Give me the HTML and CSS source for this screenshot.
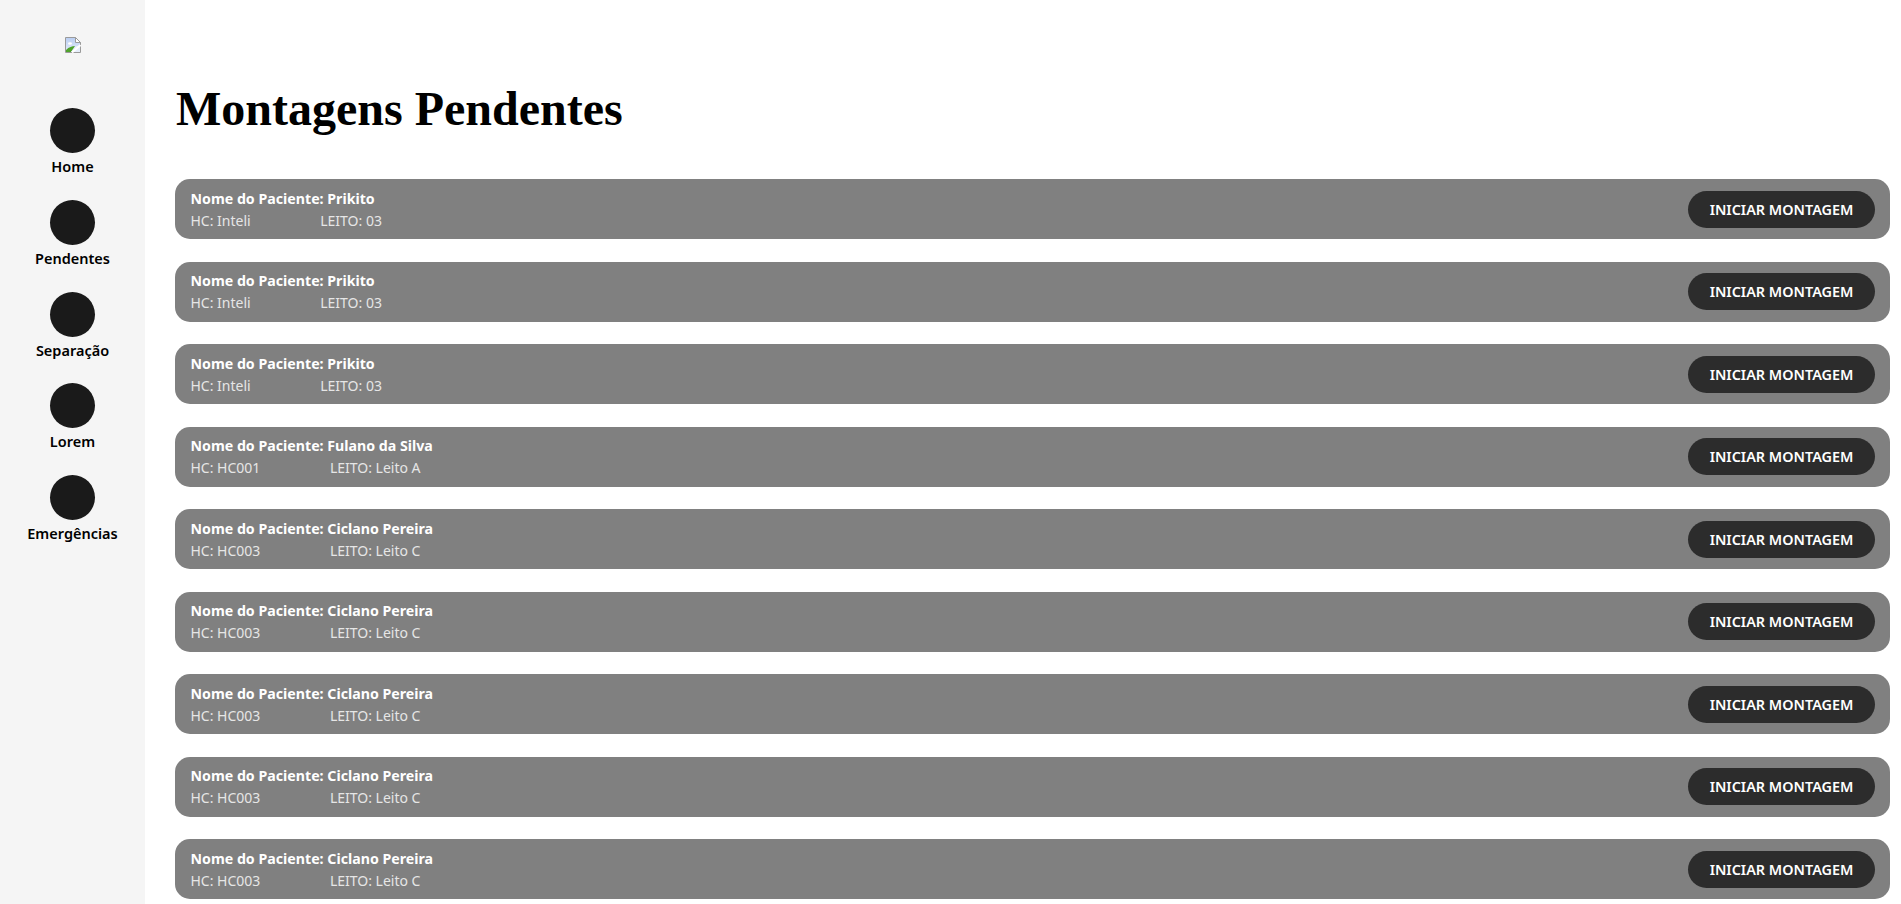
FILE: index.html
```html
<!DOCTYPE html>
<html lang="pt-BR">
<head>
    <meta charset="UTF-8">
    <title>Montagens Pendentes</title>
    <link rel="stylesheet" href="styles.css">
</head>
<body>
    <aside class="sidebar">
        <div class="logo">
            <svg width="16" height="16" viewBox="0 0 16 16">
                <defs>
                    <linearGradient id="sky" x1="0" y1="0" x2="0" y2="1">
                        <stop offset="0" stop-color="#b9cdf2"/>
                        <stop offset="1" stop-color="#e6eefb"/>
                    </linearGradient>
                </defs>
                <path d="M0.5 0.5H10.5L15.5 5.5V15.5H0.5Z" fill="url(#sky)" stroke="#9a9a9a"/>
                <path d="M10.5 0.5V5.5H15.5Z" fill="#fff" stroke="#9a9a9a"/>
                <path d="M3 6.5a2 1.2 0 0 1 4 0a2 1.2 0 0 1-4 0Z" fill="#fff"/>
                <path d="M1 15V13C4 10 7 9 10 9L6 15Z" fill="#4fa32c"/>
                <path d="M6 15L11 9L15 9L15 15Z" fill="#e6eefb"/>
                <path d="M7 15.5L15.5 8" stroke="#fff" stroke-width="2"/>
            </svg>
        </div>
        <nav class="nav">
            <a class="nav-item"><span class="nav-icon"></span>Home</a>
            <a class="nav-item"><span class="nav-icon"></span>Pendentes</a>
            <a class="nav-item"><span class="nav-icon"></span>Separação</a>
            <a class="nav-item"><span class="nav-icon"></span>Lorem</a>
            <a class="nav-item"><span class="nav-icon"></span>Emergências</a>
        </nav>
    </aside>

    <main class="content">
        <h1 class="title">Montagens Pendentes</h1>
        <div class="list">
            <div class="row">
                <div class="info">
                    <p class="name">Nome do Paciente: Prikito</p>
                    <p class="details"><span>HC: Inteli</span><span>LEITO: 03</span></p>
                </div>
                <button class="start">INICIAR MONTAGEM</button>
            </div>
            <div class="row">
                <div class="info">
                    <p class="name">Nome do Paciente: Prikito</p>
                    <p class="details"><span>HC: Inteli</span><span>LEITO: 03</span></p>
                </div>
                <button class="start">INICIAR MONTAGEM</button>
            </div>
            <div class="row">
                <div class="info">
                    <p class="name">Nome do Paciente: Prikito</p>
                    <p class="details"><span>HC: Inteli</span><span>LEITO: 03</span></p>
                </div>
                <button class="start">INICIAR MONTAGEM</button>
            </div>
            <div class="row">
                <div class="info">
                    <p class="name">Nome do Paciente: Fulano da Silva</p>
                    <p class="details"><span>HC: HC001</span><span>LEITO: Leito A</span></p>
                </div>
                <button class="start">INICIAR MONTAGEM</button>
            </div>
            <div class="row">
                <div class="info">
                    <p class="name">Nome do Paciente: Ciclano Pereira</p>
                    <p class="details"><span>HC: HC003</span><span>LEITO: Leito C</span></p>
                </div>
                <button class="start">INICIAR MONTAGEM</button>
            </div>
            <div class="row">
                <div class="info">
                    <p class="name">Nome do Paciente: Ciclano Pereira</p>
                    <p class="details"><span>HC: HC003</span><span>LEITO: Leito C</span></p>
                </div>
                <button class="start">INICIAR MONTAGEM</button>
            </div>
            <div class="row">
                <div class="info">
                    <p class="name">Nome do Paciente: Ciclano Pereira</p>
                    <p class="details"><span>HC: HC003</span><span>LEITO: Leito C</span></p>
                </div>
                <button class="start">INICIAR MONTAGEM</button>
            </div>
            <div class="row">
                <div class="info">
                    <p class="name">Nome do Paciente: Ciclano Pereira</p>
                    <p class="details"><span>HC: HC003</span><span>LEITO: Leito C</span></p>
                </div>
                <button class="start">INICIAR MONTAGEM</button>
            </div>
            <div class="row">
                <div class="info">
                    <p class="name">Nome do Paciente: Ciclano Pereira</p>
                    <p class="details"><span>HC: HC003</span><span>LEITO: Leito C</span></p>
                </div>
                <button class="start">INICIAR MONTAGEM</button>
            </div>
        </div>
    </main>
</body>
</html>
```

FILE: styles.css
```css
*{
    margin:0;
    padding:0;
    box-sizing:border-box;
}

body{
    display:flex;
    height:904px;
    overflow:hidden;
    font-family:"Noto Sans", sans-serif;
    background-color:white;
}

.sidebar{
    width:145px;
    flex-shrink:0;
    background-color:#f5f5f5;
    padding-top:37px;
}

.logo{
    display:flex;
    justify-content:center;
    height:71px;
}

.nav{
    display:flex;
    flex-direction:column;
    gap:23.75px;
}

.nav-item{
    display:flex;
    flex-direction:column;
    align-items:center;
    font-size:14.5px;
    font-weight:600;
    line-height:20px;
    color:black;
}

.nav-icon{
    width:45px;
    height:45px;
    flex-shrink:0;
    border-radius:50%;
    background-color:#1a1a1a;
    margin-bottom:3px;
}

.content{
    flex:1;
    padding:0 11px 0 30px;
}

.title{
    font-family:"Liberation Serif", serif;
    font-size:48px;
    font-weight:bold;
    line-height:55px;
    margin:81px 0 43px 1px;
    color:black;
}

.list{
    display:flex;
    flex-direction:column;
    gap:22.5px;
}

.row{
    display:flex;
    justify-content:space-between;
    align-items:center;
    height:60px;
    padding:0 15px 0 15.5px;
    border-radius:15px;
    background-color:#808080;
}

.info{
    margin-top:3px;
}

.name{
    font-size:14.2px;
    font-weight:700;
    line-height:20px;
    color:white;
}

.details{
    font-size:14px;
    line-height:24px;
    color:#e6e6e6;
}

.details span{
    margin-right:69.5px;
}

.start{
    width:187px;
    height:37px;
    border:none;
    border-radius:19px;
    background-color:#2c2c2c;
    color:white;
    font-family:inherit;
    font-size:14.4px;
    font-weight:600;
}
```
